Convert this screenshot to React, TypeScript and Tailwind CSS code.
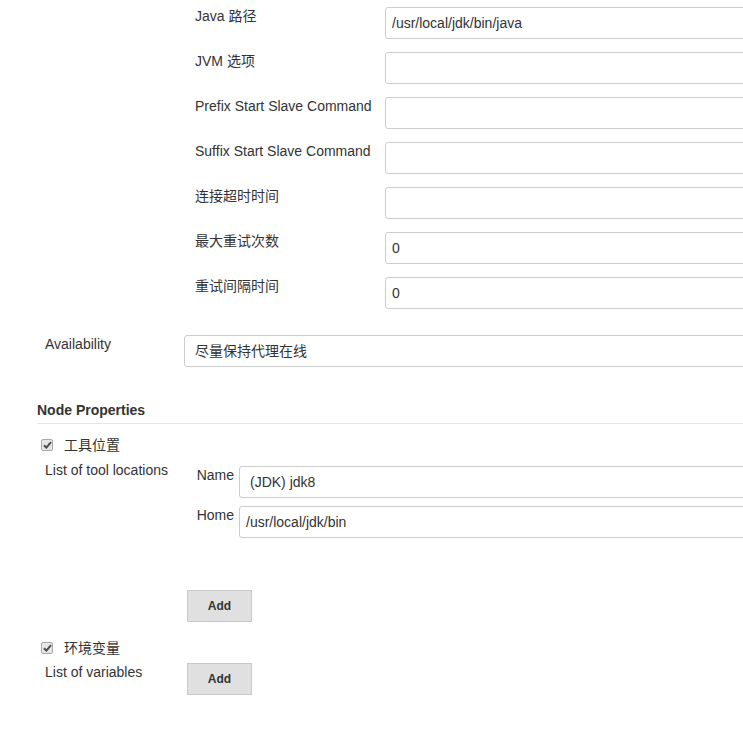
import React from "react";

const Box = ({ text, className = "" }: { text?: string; className?: string }) => (
  <div
    className={`h-[32px] w-[600px] shrink-0 border border-[#cccccc] rounded-[3px] bg-white flex items-center text-[14px] text-[#333] whitespace-nowrap ${className}`}
  >
    {text}
  </div>
);

const Check = () => (
  <span className="mt-[4px] w-[12px] h-[12px] shrink-0 rounded-[2px] border border-[#a9a9a9] bg-[#e6e6e6] flex items-center justify-center">
    <svg width="9" height="8" viewBox="0 0 9 8">
      <path d="M1 4.2 L3.4 6.6 L8 1.2" fill="none" stroke="#4a4a4a" strokeWidth="2" />
    </svg>
  </span>
);

const AddBtn = ({ className = "" }: { className?: string }) => (
  <div
    className={`w-[65px] h-[32px] shrink-0 border border-[#c9c9c9] bg-[#e0e0e0] flex items-center justify-center text-[12px] font-bold text-[#333] ${className}`}
  >
    Add
  </div>
);

const topRows: [string, string][] = [
  ["Java 路径", "/usr/local/jdk/bin/java"],
  ["JVM 选项", ""],
  ["Prefix Start Slave Command", ""],
  ["Suffix Start Slave Command", ""],
  ["连接超时时间", ""],
  ["最大重试次数", "0"],
  ["重试间隔时间", "0"],
];

export default function App() {
  return (
    <div
      className="w-[743px] h-[735px] overflow-hidden bg-white text-[#333] text-[14px] leading-[20px]"
      style={{ fontFamily: '"Liberation Sans", Arial, "Noto Sans CJK SC", sans-serif' }}
    >
      <div className="pt-[6px] pl-[195px] flex flex-col gap-[12px]">
        {topRows.map(([label, val]) => (
          <div key={label} className="flex items-start">
            <div className="w-[190px] shrink-0 whitespace-nowrap">{label}</div>
            <Box text={val} className="mt-[1px] px-[6px]" />
          </div>
        ))}
      </div>

      <div className="mt-[25px] pl-[45px] flex items-start">
        <div className="w-[139px] shrink-0">Availability</div>
        <Box text="尽量保持代理在线" className="mt-[1px] px-[10px]" />
      </div>

      <div className="mt-[33px] ml-[37px] pb-[3px] border-b border-[#e5e5e5] font-bold">
        Node Properties
      </div>

      <div className="mt-[11px] ml-[41px] flex items-start gap-[11px]">
        <Check />
        <span>工具位置</span>
      </div>

      <div className="mt-[5px] ml-[45px] flex items-start">
        <div className="w-[142px] shrink-0">List of tool locations</div>
        <div className="flex flex-col pt-[5px] shrink-0 w-[700px]">
          <div className="flex items-start">
            <div className="w-[52px] pr-[5px] text-right shrink-0">Name</div>
            <Box text="(JDK) jdk8" className="mt-[1px] pl-[10px]" />
          </div>
          <div className="flex items-start mt-[7px]">
            <div className="w-[52px] pr-[5px] text-right shrink-0">Home</div>
            <Box text="/usr/local/jdk/bin" className="mt-[1px] px-[6px]" />
          </div>
          <AddBtn className="mt-[52px]" />
        </div>
      </div>

      <div className="mt-[16px] ml-[41px] flex items-start gap-[11px]">
        <Check />
        <span>环境变量</span>
      </div>

      <div className="mt-[4px] ml-[45px] flex items-start">
        <div className="w-[142px] shrink-0">List of variables</div>
        <AddBtn className="mt-[1px]" />
      </div>
    </div>
  );
}
